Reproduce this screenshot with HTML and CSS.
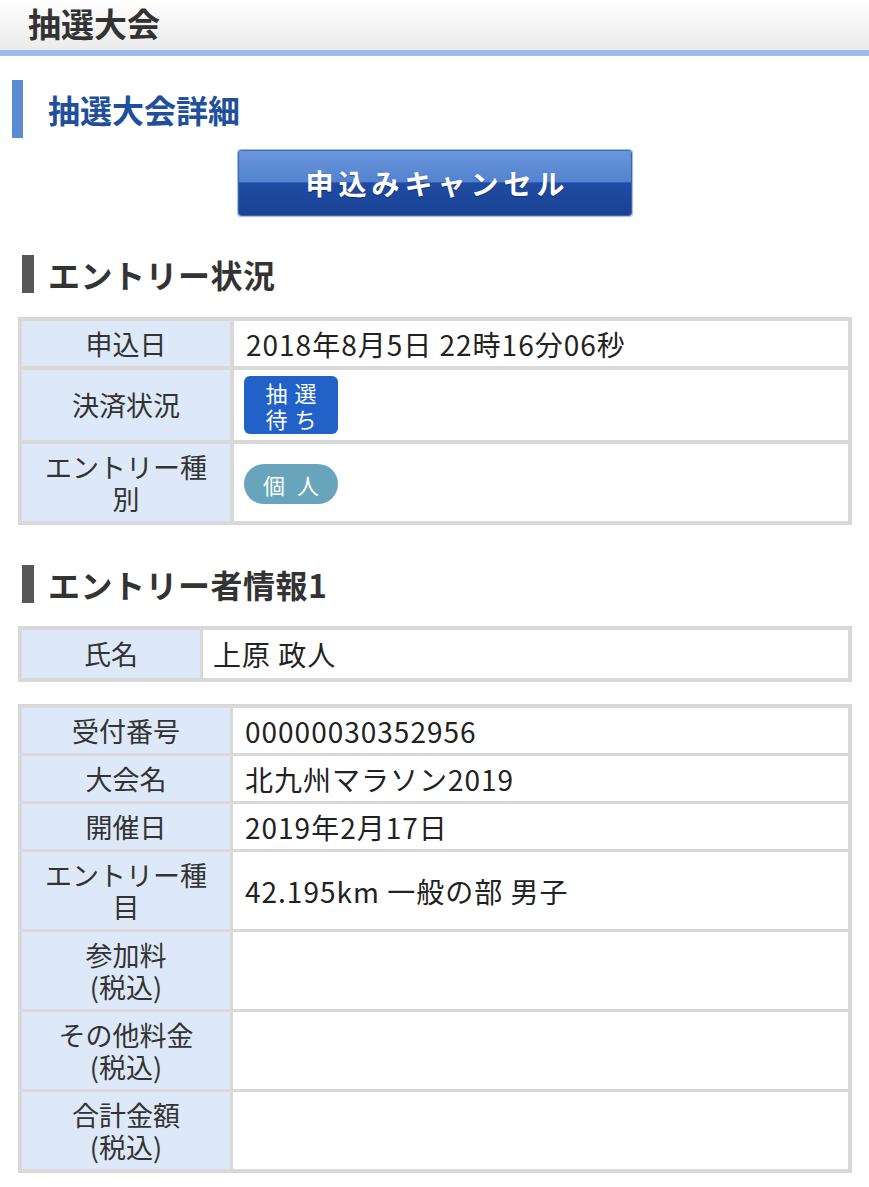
FILE: index.html
```html
<!DOCTYPE html>
<html lang="ja">
<head>
<meta charset="utf-8">
<title>抽選大会</title>
<link rel="stylesheet" href="styles.css">
</head>
<body>
<header class="topbar"><h1 class="topbar-title">抽選大会</h1></header>

<main class="page">
  <h2 class="page-title">抽選大会詳細</h2>

  <div class="btn-row"><button class="cancel-btn" type="button">申込みキャンセル</button></div>

  <h3 class="section-title">エントリー状況</h3>
  <div class="grid status">
    <div class="lab">申込日</div>
    <div class="val">2018年8月5日 22時16分06秒</div>
    <div class="lab">決済状況</div>
    <div class="val badge-cell"><span class="badge-wait">抽選<br>待ち</span></div>
    <div class="lab">エントリー種別</div>
    <div class="val"><span class="badge-type">個人</span></div>
  </div>

  <h3 class="section-title second">エントリー者情報1</h3>
  <div class="grid narrow">
    <div class="lab">氏名</div>
    <div class="val">上原 政人</div>
  </div>

  <div class="grid detail">
    <div class="lab">受付番号</div>
    <div class="val">00000030352956</div>
    <div class="lab">大会名</div>
    <div class="val">北九州マラソン2019</div>
    <div class="lab">開催日</div>
    <div class="val">2019年2月17日</div>
    <div class="lab">エントリー種目</div>
    <div class="val">42.195km 一般の部 男子</div>
    <div class="lab">参加料<br>(税込)</div>
    <div class="val"></div>
    <div class="lab">その他料金<br>(税込)</div>
    <div class="val"></div>
    <div class="lab">合計金額<br>(税込)</div>
    <div class="val"></div>
  </div>
</main>
</body>
</html>
```

FILE: styles.css
```css
* { box-sizing: border-box; }

html, body {
  margin: 0;
  padding: 0;
  background: #ffffff;
}

body {
  font-family: "Noto Sans CJK JP", "Noto Sans", sans-serif;
  color: #333333;
}

.topbar {
  height: 56px;
  background: linear-gradient(#ffffff, #ebebeb);
  border-bottom: 6px solid #9cbbea;
  padding-left: 28px;
  display: flex;
  align-items: center;
}

.topbar-title {
  margin: 0;
  font-size: 33px;
  font-weight: 700;
  color: #333333;
  line-height: 1;
  position: relative;
  top: -2px;
}

.page {
  padding: 0 17px 20px 18px;
}

.page-title {
  margin: 24px 0 0 -6px;
  height: 58px;
  border-left: 11px solid #5b8bd0;
  padding-left: 25px;
  display: flex;
  align-items: center;
  font-size: 32px;
  font-weight: 700;
  color: #224f9b;
  line-height: 1;
}

.btn-row {
  display: flex;
  justify-content: center;
  margin-top: 12px;
}

.cancel-btn {
  width: 394px;
  height: 66px;
  border: 1px solid #3a66b8;
  border-radius: 3px;
  background: linear-gradient(#6a96dc 0%, #5383cf 48%, #1f4ba2 50%, #1a4394 100%);
  box-shadow: 0 0 0 1px #a9c0e6;
  color: #ffffff;
  font-family: "Noto Sans CJK JP", sans-serif;
  font-size: 28px;
  font-weight: 700;
  letter-spacing: 5px;
  text-indent: 5px;
  text-shadow: 0 1px 1px rgba(0, 0, 0, 0.35);
  padding: 0;
}

.section-title {
  margin: 39px 0 0 4px;
  height: 38px;
  border-left: 12px solid #585858;
  padding-left: 14px;
  display: flex;
  align-items: center;
  font-size: 32px;
  font-weight: 700;
  letter-spacing: 0.5px;
  color: #333333;
  line-height: 1;
}

.section-title.second {
  margin-top: 40px;
}

.grid {
  display: grid;
  grid-template-columns: 208px 1fr;
  gap: 3px;
  padding: 3px;
  border: 1px solid #d6d6d6;
  background: #d9d9d9;
  margin-top: 24px;
  font-size: 27px;
  line-height: 32px;
}

.grid.status {
  gap: 4px;
  padding: 3px;
}

.grid.narrow {
  grid-template-columns: 178px 1fr;
  margin-top: 23px;
}

.grid.detail {
  margin-top: 22px;
}

.lab {
  background: #dde9f8;
  color: #333333;
  text-align: center;
  display: flex;
  align-items: center;
  justify-content: center;
  padding: 6.5px 10px;
  min-height: 45px;
}

.val {
  background: #ffffff;
  color: #222222;
  display: flex;
  align-items: center;
  padding: 6.5px 12px;
  min-height: 45px;
  font-size: 28px;
  letter-spacing: 1px;
}

.grid.narrow .lab,
.grid.narrow .val {
  min-height: 48px;
}

.grid.narrow .val {
  padding-left: 10px;
}

.val.badge-cell {
  padding-top: 6px;
  padding-bottom: 6px;
  padding-left: 10px;
}

.badge-wait {
  display: flex;
  align-items: center;
  justify-content: center;
  width: 94px;
  height: 58px;
  border-radius: 6px;
  background: #2262c8;
  color: #ffffff;
  font-size: 22px;
  line-height: 26px;
  letter-spacing: 7px;
  padding-left: 7px;
  text-align: center;
}

.badge-type {
  display: flex;
  align-items: center;
  justify-content: center;
  width: 94px;
  height: 40px;
  border-radius: 20px;
  background: #68a5bc;
  color: #ffffff;
  font-size: 22px;
  line-height: 1;
  letter-spacing: 12px;
  padding-left: 12px;
  margin-left: -2px;
  margin-top: 2px;
}
```
